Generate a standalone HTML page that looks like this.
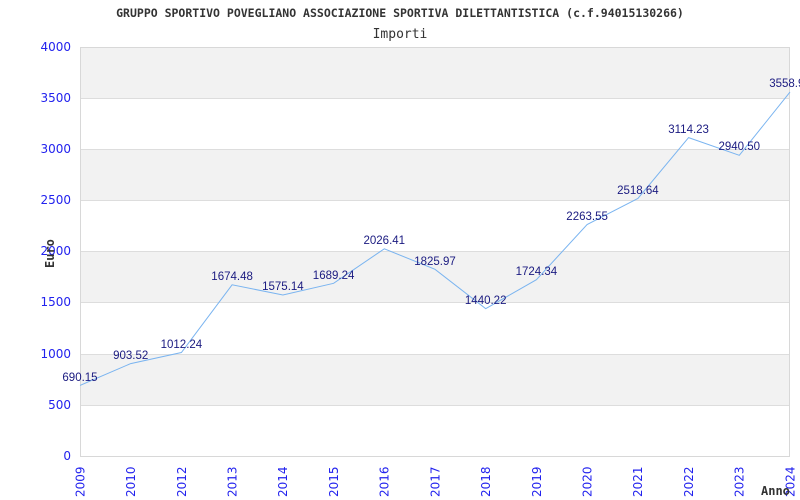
<!DOCTYPE html>
<html><head><meta charset="utf-8"><style>
html,body{margin:0;padding:0;background:#fff;width:800px;height:500px;overflow:hidden}
svg{display:block}
.t{font-family:"DejaVu Sans Mono","Liberation Mono",monospace;fill:#333}
.ax{font-family:"DejaVu Sans","Liberation Sans",sans-serif;font-size:12px;fill:#2222ee}
.lb{font-family:"Liberation Sans",sans-serif;font-size:11.5px;fill:#1a1a80;text-anchor:middle}
</style></head><body>
<svg width="800" height="500" viewBox="0 0 800 500">
<text class="t" x="400" y="17" text-anchor="middle" font-size="11.5" font-weight="bold">GRUPPO SPORTIVO POVEGLIANO ASSOCIAZIONE SPORTIVA DILETTANTISTICA (c.f.94015130266)</text>
<text class="t" x="400" y="38" text-anchor="middle" font-size="13">Importi</text>
<g fill="#f2f2f2">
<rect x="80" y="47" width="710" height="51"/>
<rect x="80" y="149" width="710" height="51"/>
<rect x="80" y="251" width="710" height="51"/>
<rect x="80" y="354" width="710" height="51"/>
</g>
<g stroke="#dddddd" stroke-width="1">
<line x1="80" y1="98.5" x2="790" y2="98.5"/>
<line x1="80" y1="149.5" x2="790" y2="149.5"/>
<line x1="80" y1="200.5" x2="790" y2="200.5"/>
<line x1="80" y1="251.5" x2="790" y2="251.5"/>
<line x1="80" y1="302.5" x2="790" y2="302.5"/>
<line x1="80" y1="354.5" x2="790" y2="354.5"/>
<line x1="80" y1="405.5" x2="790" y2="405.5"/>
</g>
<rect x="80.5" y="47.5" width="709" height="409" fill="none" stroke="#d8d8d8"/>
<g class="ax" text-anchor="end">
<text x="71" y="51">4000</text><text x="71" y="102">3500</text><text x="71" y="153">3000</text><text x="71" y="204">2500</text><text x="71" y="255">2000</text><text x="71" y="306">1500</text><text x="71" y="358">1000</text><text x="71" y="409">500</text><text x="71" y="460">0</text>
</g>
<text class="t" font-size="12" font-weight="bold" transform="translate(54,268) rotate(-90)">Euro</text>
<g class="ax">
<text transform="translate(84.5,497) rotate(-90)">2009</text>
<text transform="translate(135,497) rotate(-90)">2010</text>
<text transform="translate(186,497) rotate(-90)">2012</text>
<text transform="translate(236.5,497) rotate(-90)">2013</text>
<text transform="translate(287,497) rotate(-90)">2014</text>
<text transform="translate(338,497) rotate(-90)">2015</text>
<text transform="translate(388.5,497) rotate(-90)">2016</text>
<text transform="translate(439.5,497) rotate(-90)">2017</text>
<text transform="translate(490,497) rotate(-90)">2018</text>
<text transform="translate(541,497) rotate(-90)">2019</text>
<text transform="translate(591.5,497) rotate(-90)">2020</text>
<text transform="translate(642,497) rotate(-90)">2021</text>
<text transform="translate(693,497) rotate(-90)">2022</text>
<text transform="translate(743.5,497) rotate(-90)">2023</text>
<text transform="translate(794.5,497) rotate(-90)">2024</text>
</g>
<text class="t" x="761" y="495" font-size="12" font-weight="bold">Anno</text>
<polyline fill="none" stroke="#7ab4f0" stroke-width="1" points="80,385.4 130.7,363.6 181.4,352.5 232.1,284.8 282.9,295 333.6,283.3 384.3,248.8 435,269.3 485.7,308.7 536.4,279.7 587.1,224.5 637.9,198.5 688.6,137.6 739.3,155.3 790,92.1"/>
<g class="lb">
<text x="80" y="381">690.15</text>
<text x="130.7" y="359">903.52</text>
<text x="181.4" y="348">1012.24</text>
<text x="232.1" y="280">1674.48</text>
<text x="282.9" y="290">1575.14</text>
<text x="333.6" y="279">1689.24</text>
<text x="384.3" y="244">2026.41</text>
<text x="435" y="265">1825.97</text>
<text x="485.7" y="304">1440.22</text>
<text x="536.4" y="275">1724.34</text>
<text x="587.1" y="220">2263.55</text>
<text x="637.9" y="194">2518.64</text>
<text x="688.6" y="133">3114.23</text>
<text x="739.3" y="150">2940.50</text>
<text x="790" y="87">3558.90</text>
</g>
</svg>
</body></html>
